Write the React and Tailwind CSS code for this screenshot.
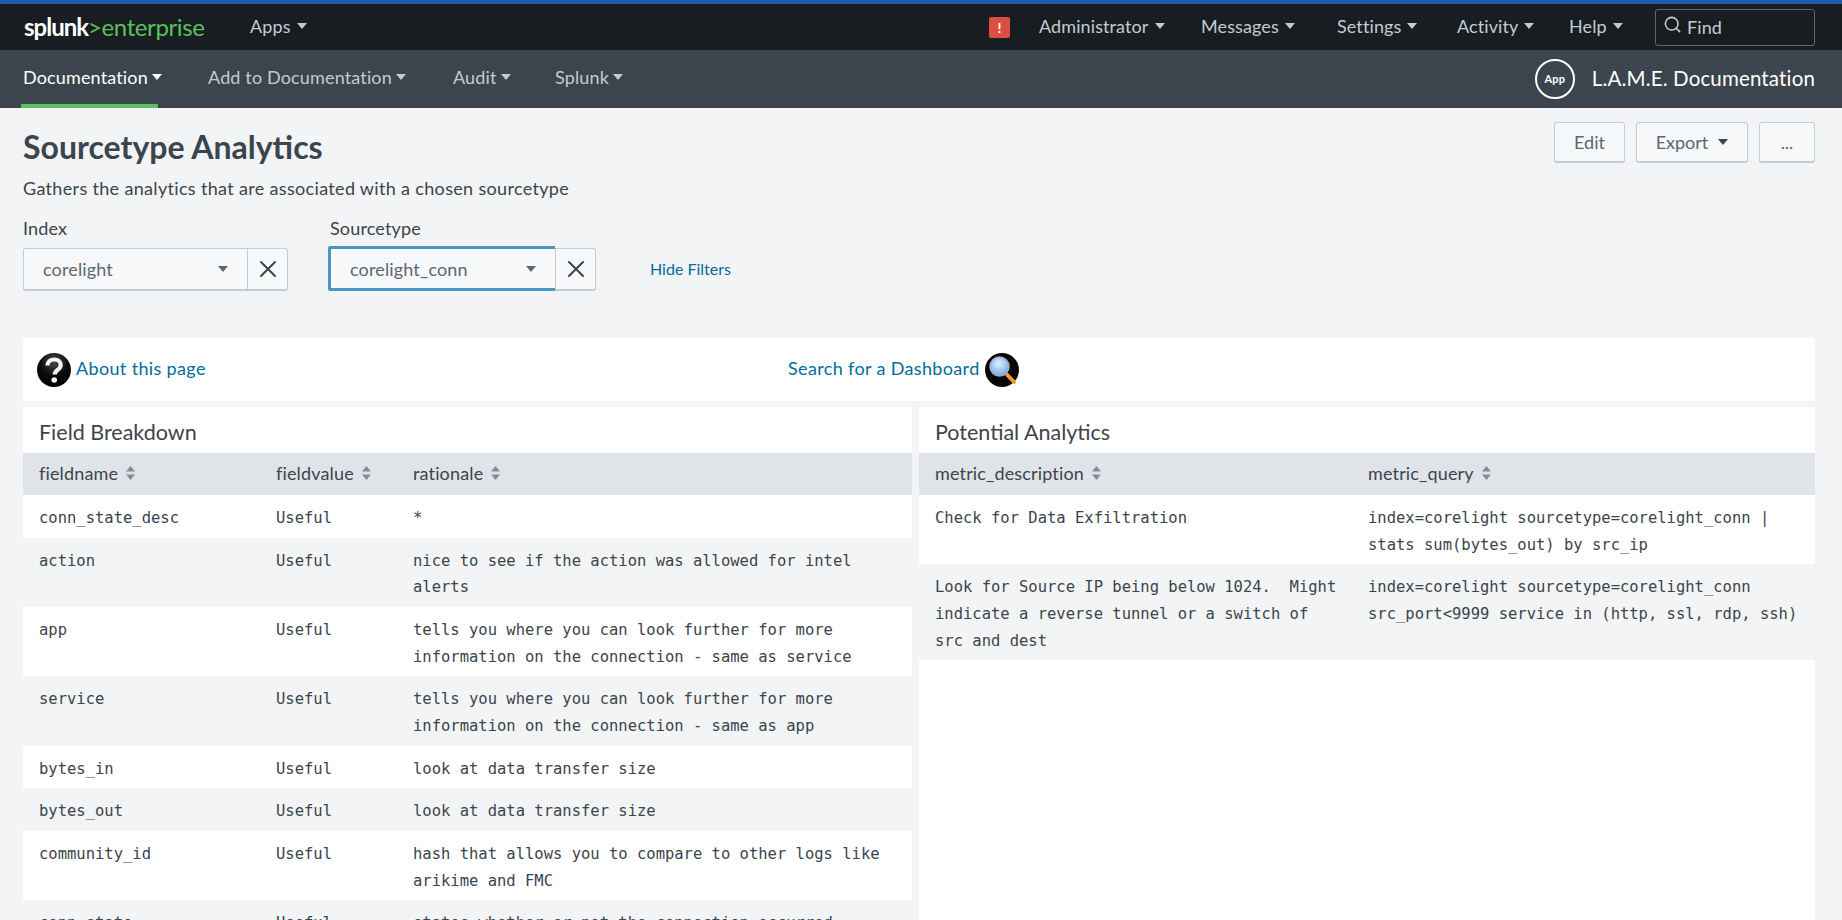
import { Search, X } from 'lucide-react'

const FONT = 'font-["Lato",sans-serif]'
const MONO = 'font-["DejaVu_Sans_Mono",monospace]'

const TOP_ITEMS = [
  { label: 'Administrator', width: 'w-[162px]' },
  { label: 'Messages', width: 'w-[136px]' },
  { label: 'Settings', width: 'w-[120px]' },
  { label: 'Activity', width: 'w-[112px]' },
  { label: 'Help', width: 'w-[86px]' },
]

const APP_NAV = [
  { label: 'Documentation', active: true, width: 'w-[185px]' },
  { label: 'Add to Documentation', width: 'w-[245px]' },
  { label: 'Audit', width: 'w-[102px]' },
  { label: 'Splunk', width: 'w-[100px]' },
]

const FIELD_ROWS = [
  ['conn_state_desc', 'Useful', '*'],
  ['action', 'Useful', 'nice to see if the action was allowed for intel alerts'],
  ['app', 'Useful', 'tells you where you can look further for more information on the connection - same as service'],
  ['service', 'Useful', 'tells you where you can look further for more information on the connection - same as app'],
  ['bytes_in', 'Useful', 'look at data transfer size'],
  ['bytes_out', 'Useful', 'look at data transfer size'],
  ['community_id', 'Useful', 'hash that allows you to compare to other logs like arikime and FMC'],
  ['conn_state', 'Useful', 'states whether or not the connection occurred'],
]

const METRIC_ROWS = [
  ['Check for Data Exfiltration', 'index=corelight sourcetype=corelight_conn | stats sum(bytes_out) by src_ip'],
  ['Look for Source IP being below 1024.  Might indicate a reverse tunnel or a switch of src and dest', 'index=corelight sourcetype=corelight_conn src_port<9999 service in (http, ssl, rdp, ssh)'],
]

function Caret({ className }) {
  return (
    <svg viewBox="0 0 10 6" className={className} fill="currentColor">
      <path d="M0 0h10L5 6z" />
    </svg>
  )
}

function SortIcon() {
  return (
    <svg viewBox="0 0 9 14" className="w-[9px] h-[14px] text-[#818d99] ml-[8px] shrink-0" fill="currentColor">
      <path d="M4.500 0L9 5.500H0z" />
      <path d="M4.500 14L0 8.500h9z" />
    </svg>
  )
}

function HelpBadge() {
  return (
    <svg viewBox="0 0 34 34" className="w-[34px] h-[34px] shrink-0">
      <defs>
        <radialGradient id="helpShade" cx="50%" cy="25%" r="75%">
          <stop offset="0%" stopColor="#4a4a4a" />
          <stop offset="55%" stopColor="#0c0c0c" />
          <stop offset="100%" stopColor="#000" />
        </radialGradient>
      </defs>
      <circle cx="17" cy="17" r="17" fill="url(#helpShade)" />
      <path d="M10.500 12.500c0-4 3-6 6.700-6 3.900 0 6.500 2.200 6.500 5.400 0 5-6 5.100-6 9.600" fill="none" stroke="#f4f4f4" strokeWidth="4.200" />
      <circle cx="17.200" cy="27" r="2.800" fill="#f4f4f4" />
    </svg>
  )
}

function SearchBadge() {
  return (
    <svg viewBox="0 0 34 34" className="w-[34px] h-[34px] shrink-0">
      <defs>
        <radialGradient id="glassShade" cx="45%" cy="35%" r="65%">
          <stop offset="0%" stopColor="#e2f0ff" />
          <stop offset="100%" stopColor="#6fa8e8" />
        </radialGradient>
      </defs>
      <circle cx="17" cy="17" r="17" fill="#070707" />
      <path d="M21 20.500l8 8.500" stroke="#f39a2b" strokeWidth="4" strokeLinecap="round" />
      <circle cx="14.500" cy="13.500" r="9.500" fill="url(#glassShade)" stroke="#9fb0c0" strokeWidth="1.500" />
    </svg>
  )
}

function TopBar() {
  return (
    <div className="h-[50px] border-t-4 border-[#1e5ba8] bg-[#171d21] flex items-center text-[#c3cbd4] text-[18px] tracking-[0.1px]">
      <div className="ml-[24px] w-[226px] text-[24px] leading-none pb-[1px]">
        <span className="text-white font-bold tracking-[-1px]">splunk</span>
        <span className="text-[#5cc05c] tracking-[-0.4px]">&gt;enterprise</span>
      </div>
      <div className="flex items-center gap-[6px] pb-[2px]">
        Apps <Caret className="w-[10px] h-[6px]" />
      </div>
      <div className="ml-auto flex items-center">
        <div className="w-[21px] h-[21px] rounded-[2px] bg-[#dc4e41] text-white text-[14px] font-bold flex items-center justify-center mr-[29px]">!</div>
        {TOP_ITEMS.map(item => (
          <div key={item.label} className={`flex items-center gap-[6px] pb-[2px] ${item.width}`}>
            {item.label} <Caret className="w-[10px] h-[6px]" />
          </div>
        ))}
        <div className="w-[160px] h-[37px] border border-[#5c6773] rounded-[3px] mr-[27px] flex items-center pl-[7px] gap-[5px]">
          <Search size={19} strokeWidth={2} className="-mt-[5px]" />
          Find
        </div>
      </div>
    </div>
  )
}

function AppBar() {
  return (
    <div className="h-[58px] bg-[#3c444d] flex items-stretch text-[18px] tracking-[0.15px]">
      <div className="ml-[23px] flex items-stretch">
        {APP_NAV.map(item => (
          <div
            key={item.label}
            className={`relative flex items-center gap-[4px] pb-[4px] ${item.width} ${item.active ? 'text-white' : 'text-[#c3cbd4]'}`}
          >
            {item.label} <Caret className="w-[10px] h-[6px]" />
            {item.active && <div className="absolute left-[-2px] bottom-0 w-[137px] h-[4px] bg-[#5cc05c]" />}
          </div>
        ))}
      </div>
      <div className="ml-auto mr-[27px] flex items-center text-white">
        <div className="w-[40px] h-[40px] rounded-full border-2 border-white flex items-center justify-center text-[11px] font-bold mr-[17px]">App</div>
        <span className="text-[20.5px] pb-[2px]">L.A.M.E. Documentation</span>
      </div>
    </div>
  )
}

function ToolButton({ children, className }) {
  return (
    <div className={`h-[41px] rounded-[3px] border border-[#c3cbd4] border-b-2 bg-[#f7f8fa] text-[#5c6773] text-[18px] flex items-center justify-center ${className}`}>
      {children}
    </div>
  )
}

function FilterSelect({ label, value, focused, width }) {
  return (
    <div>
      <div className="text-[18px] tracking-[0.15px] leading-[24px] mb-[8px] text-[#3c444d]">{label}</div>
      <div className="flex h-[43px]">
        <div className={`${width} relative flex items-center justify-between pl-[19px] pr-[19px] bg-[#f7f8fa] rounded-l-[3px] border border-[#c3cbd4] border-b-2 border-r-0 text-[#5c6773] text-[18px] tracking-[0.15px]`}>
          {value}
          <Caret className="w-[10px] h-[6px]" />
          {focused && <div className="absolute -left-[3px] -top-[3px] -bottom-[2px] right-0 border-[3px] border-r-0 border-[#4a97bf] rounded-l-[3px]" />}
        </div>
        <div className="w-[41px] flex items-center justify-center bg-[#f7f8fa] border border-[#c3cbd4] border-b-2 rounded-r-[3px] text-[#3c444d]">
          <X size={28} strokeWidth={1.700} />
        </div>
      </div>
    </div>
  )
}

function HeaderCell({ children, className }) {
  return (
    <th className={`${className} h-[42px] pl-[16px] pb-[2px] font-normal text-left text-[18px] tracking-[0.15px] text-[#3c444d]`}>
      <span className="flex items-center">{children}<SortIcon /></span>
    </th>
  )
}

function Panel({ title, className, children }) {
  return (
    <div className={`bg-white ${className}`}>
      <div className="h-[46px] pl-[16px] pt-[11px] text-[21.5px] leading-[28px] text-[#3c444d]">{title}</div>
      {children}
    </div>
  )
}

function DataTable({ columns, rows }) {
  return (
    <table className="w-full table-fixed border-collapse">
      <thead className="bg-[#e0e4e8]">
        <tr>
          {columns.map(col => <HeaderCell key={col.label} className={col.width}>{col.label}</HeaderCell>)}
        </tr>
      </thead>
      <tbody className={`${MONO} text-[15.5px] leading-[26.67px] text-[#3c444d]`}>
        {rows.map((row, i) => (
          <tr key={i} className={i % 2 ? 'bg-[#f2f4f5]' : 'bg-white'}>
            {row.map((cell, j) => (
              <td key={j} className="align-top pl-[16px] pr-[12px] pt-[10px] pb-[6px] whitespace-pre-wrap">{cell}</td>
            ))}
          </tr>
        ))}
      </tbody>
    </table>
  )
}

export default function App() {
  return (
    <div className={`h-screen overflow-hidden bg-[#f2f4f5] ${FONT}`}>
      <TopBar />
      <AppBar />
      <div className="px-[23px] pr-[27px]">
        <div className="flex justify-between pt-[14px]">
          <div className="pt-[5px]">
            <h1 className="text-[32px] leading-[40px] font-bold text-[#3c444d]">Sourcetype Analytics</h1>
            <p className="mt-[9px] text-[18px] tracking-[0.33px] leading-[24px] text-[#3c444d]">Gathers the analytics that are associated with a chosen sourcetype</p>
          </div>
          <div className="flex gap-[11px]">
            <ToolButton className="w-[71px]">Edit</ToolButton>
            <ToolButton className="w-[112px] gap-[10px]">Export <Caret className="w-[10px] h-[6px] text-[#3c444d]" /></ToolButton>
            <ToolButton className="w-[56px]">...</ToolButton>
          </div>
        </div>

        <div className="flex mt-[16px]">
          <FilterSelect label="Index" value="corelight" width="w-[224px]" />
          <div className="ml-[42px]">
            <FilterSelect label="Sourcetype" value="corelight_conn" focused width="w-[225px]" />
          </div>
          <a className="ml-[54px] mt-[31px] h-[43px] flex items-center text-[16px] text-[#006d9c]">Hide Filters</a>
        </div>

        <div className="mt-[47px] h-[63px] bg-white flex items-center text-[18px] tracking-[0.35px] text-[#006d9c]">
          <div className="w-[765px] pl-[14px] flex items-center gap-[5px]">
            <HelpBadge />
            <span className="pb-[2px]">About this page</span>
          </div>
          <div className="flex items-center gap-[5px]">
            <span className="pb-[2px]">Search for a Dashboard</span>
            <SearchBadge />
          </div>
        </div>

        <div className="mt-[6px] flex gap-[7px] items-stretch">
          <Panel title="Field Breakdown" className="w-[889px]">
            <DataTable
              columns={[
                { label: 'fieldname', width: 'w-[237px]' },
                { label: 'fieldvalue', width: 'w-[137px]' },
                { label: 'rationale', width: 'w-[515px]' },
              ]}
              rows={FIELD_ROWS}
            />
          </Panel>
          <Panel title="Potential Analytics" className="w-[896px]">
            <DataTable
              columns={[
                { label: 'metric_description', width: 'w-[433px]' },
                { label: 'metric_query', width: 'w-[463px]' },
              ]}
              rows={METRIC_ROWS}
            />
          </Panel>
        </div>
      </div>
    </div>
  )
}
